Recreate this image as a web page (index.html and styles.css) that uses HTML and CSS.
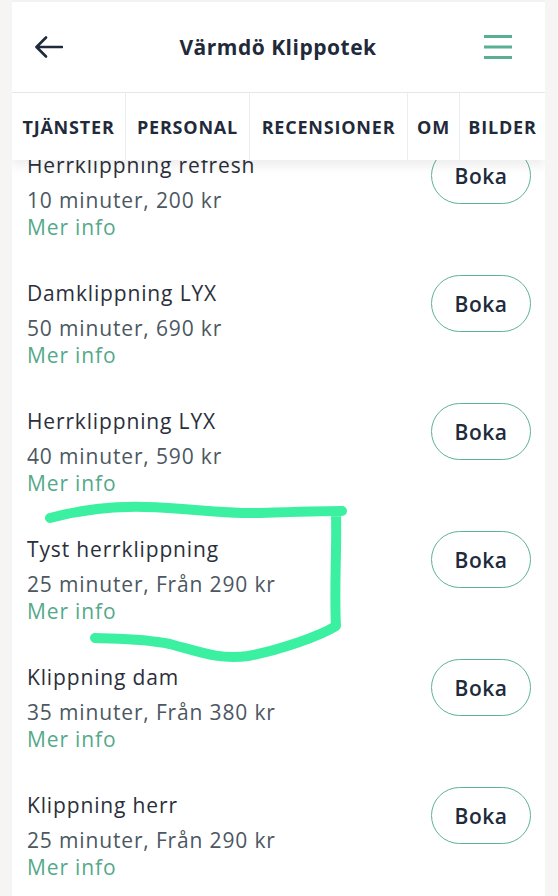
FILE: index.html
```html
<!DOCTYPE html>
<html lang="sv">
<head>
<meta charset="utf-8">
<title>Värmdö Klippotek</title>
<link rel="stylesheet" href="styles.css">
</head>
<body>
<div class="app">
  <header class="topbar">
    <svg class="back" width="28" height="22" viewBox="0 0 28 22" aria-hidden="true">
      <path d="M27 11H2M11 1.5L1.5 11L11 20.5" fill="none" stroke="#1f2a3a" stroke-width="2.6" stroke-linecap="round" stroke-linejoin="round"/>
    </svg>
    <h1 class="title">Värmdö Klippotek</h1>
    <svg class="menu" width="30" height="24" viewBox="0 0 30 24" aria-hidden="true">
      <path d="M1 1.5H29M1 12H29M1 22.5H29" fill="none" stroke="#5aae94" stroke-width="2.8"/>
    </svg>
  </header>
  <nav class="tabs">
    <span class="tab tab-first">TJÄNSTER</span>
    <span class="tab">PERSONAL</span>
    <span class="tab">RECENSIONER</span>
    <span class="tab">OM</span>
    <span class="tab">BILDER</span>
  </nav>
  <main class="list">
    <div class="item">
      <div class="info">
        <div class="name">Herrklippning refresh</div>
        <div class="meta">10 minuter, 200 kr</div>
        <div class="more">Mer info</div>
      </div>
      <button class="boka">Boka</button>
    </div>
    <div class="item">
      <div class="info">
        <div class="name">Damklippning LYX</div>
        <div class="meta">50 minuter, 690 kr</div>
        <div class="more">Mer info</div>
      </div>
      <button class="boka">Boka</button>
    </div>
    <div class="item">
      <div class="info">
        <div class="name">Herrklippning LYX</div>
        <div class="meta">40 minuter, 590 kr</div>
        <div class="more">Mer info</div>
      </div>
      <button class="boka">Boka</button>
    </div>
    <div class="item">
      <div class="info">
        <div class="name">Tyst herrklippning</div>
        <div class="meta">25 minuter, Från 290 kr</div>
        <div class="more">Mer info</div>
      </div>
      <button class="boka">Boka</button>
    </div>
    <div class="item">
      <div class="info">
        <div class="name">Klippning dam</div>
        <div class="meta">35 minuter, Från 380 kr</div>
        <div class="more">Mer info</div>
      </div>
      <button class="boka">Boka</button>
    </div>
    <div class="item">
      <div class="info">
        <div class="name">Klippning herr</div>
        <div class="meta">25 minuter, Från 290 kr</div>
        <div class="more">Mer info</div>
      </div>
      <button class="boka">Boka</button>
    </div>
  </main>
</div>
<svg class="mark" width="558" height="896" viewBox="0 0 558 896" aria-hidden="true">
  <path d="M50 518 C 80 510, 110 506, 145 507 C 190 508, 220 514, 260 513 C 290 512, 320 511, 342 511 M336 514 C 337 550, 334 590, 336 626 C 320 636, 280 650, 248 656 C 220 660, 200 652, 170 644 C 140 638, 115 639, 95 638" fill="none" stroke="#3bf0a0" stroke-width="10" stroke-linecap="round" stroke-linejoin="round"/>
</svg>
</body>
</html>
```
FILE: styles.css
```css
html, body {
  margin: 0;
  padding: 0;
}
body {
  width: 558px;
  height: 896px;
  overflow: hidden;
  background: #f7f4f4;
  font-family: "Open Sans", "Noto Sans", sans-serif;
  position: relative;
}
.app {
  width: 533px;
  height: 896px;
  margin-left: 12px;
  background: #fff;
  overflow: hidden;
}
.topbar {
  display: flex;
  align-items: center;
  justify-content: space-between;
  padding: 0 32px 0 23px;
  border-bottom: 1.5px solid #e4e9ec;
  border-top: 2px solid #f2f2f2;
  box-sizing: border-box;
  height: 93px;
}
.title {
  margin: 0 0 0 10px;
  font-size: 21px;
  font-weight: 700;
  color: #1f2a3a;
  letter-spacing: 0.5px;
}
.tabs {
  position: relative;
  z-index: 2;
  height: 67px;
  display: grid;
  grid-template-columns: 113px 124px 158px 52px 86px;
  background: #fff;
  box-shadow: 0 6px 10px rgba(0, 0, 0, 0.07);
}
.tab {
  display: flex;
  align-items: center;
  justify-content: center;
  font-size: 18px;
  font-weight: 700;
  color: #1f2a3a;
  border-left: 1.5px solid #e8eef1;
  letter-spacing: 0.8px;
  white-space: nowrap;
}
.tab-first {
  border-left: none;
}
.list {
  margin-top: -13px;
  position: relative;
  z-index: 1;
}
.item {
  height: 128px;
  display: flex;
  justify-content: space-between;
  align-items: flex-start;
  padding: 0 14px 0 15px;
}
.info {
  padding-top: 4px;
}
.name, .meta, .more {
  font-size: 21px;
  line-height: 28px;
  letter-spacing: 0.85px;
}
.name {
  color: #2b2f3b;
  margin-bottom: 8px;
}
.meta {
  color: #4c5762;
  line-height: 26px;
}
.more {
  color: #55a98b;
}
.boka {
  width: 100px;
  height: 57px;
  border: 1.5px solid #5fb297;
  border-radius: 29px;
  background: #fff;
  font-family: "Open Sans", "Noto Sans", sans-serif;
  font-size: 21px;
  font-weight: 600;
  letter-spacing: 0.5px;
  color: #1d2b3d;
  padding: 0;
}
.mark {
  position: absolute;
  left: 0;
  top: 0;
  z-index: 5;
  pointer-events: none;
}
```
